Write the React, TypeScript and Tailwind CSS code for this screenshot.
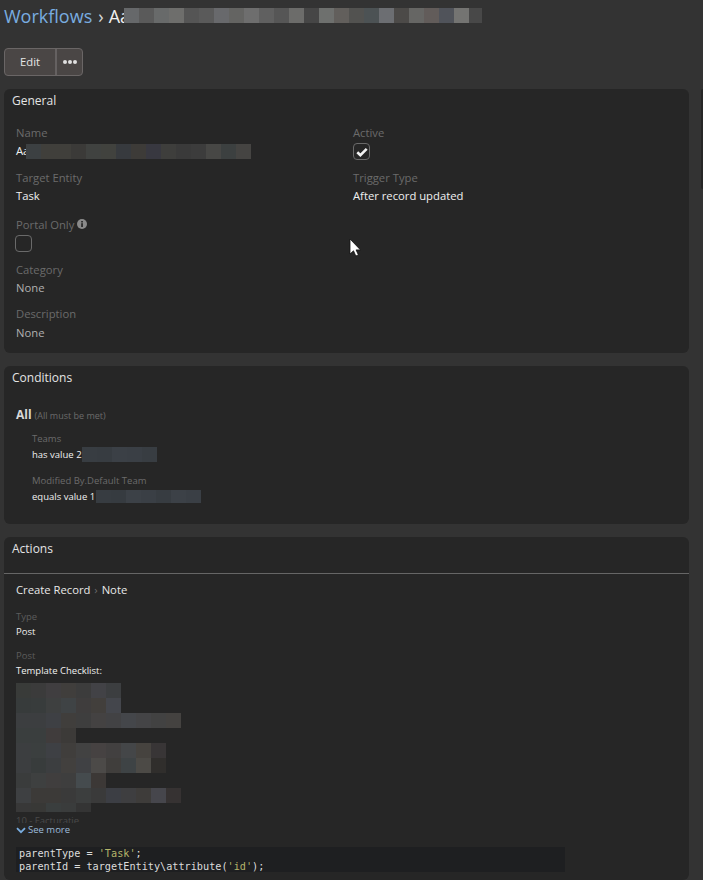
import type { ReactNode } from 'react';

const titleBlur = ['#66686a','#5a5a5a','#686a6a','#6e6e6c','#555555','#5a5a5a','#68696c','#646462','#6e6e6e','#606060','#565656','#6c6c6a','#464646','#6e706e','#625f5c','#525250','#4c5254','#6c6e72','#4c4a48','#666664','#625c5a','#50535a','#747472','#484848'];
const nameBlur = ['#3c4042','#403f3b','#403f3b','#3b3a38','#404240','#41423e','#373a3e','#3d3b38','#383840','#3e3e3c','#3a3a3a','#3c3c3c','#474745','#3c4040','#454442'];
const checklist = [
  { h: 'h-[15px]', cells: ['#393b39','#3b3b3b','#403e40','#403e3c','#3c3c3c','#424246','#3c3e40'] },
  { h: 'h-[15px]', cells: ['#373b3b','#383c3c','#3e4040','#3f4345','#3f3d3d','#423f3c','#44464c'] },
  { h: 'h-[15px]', cells: ['#3c3e40','#3c3e40','#3e4044','#403e3c','#3e3e3e','#444242','#424244','#44464a','#444446','#424242','#444240'] },
  { h: 'h-[15px]', cells: ['#3a3e3e','#3a3e3e','#403c3c','#3c3a38'] },
  { h: 'h-[15px]', cells: ['#3c3e40','#3b3f3f','#3e4044','#403e3c','#424242','#464242','#424040','#444648','#46433f','#383536'] },
  { h: 'h-[15px]', cells: ['#3c3e40','#383c3c','#3c3e40','#42403e','#404144','#4c4a48','#403e3c','#3e4345','#4c4a46','#302e2c'] },
  { h: 'h-[15px]', cells: ['#3a3c3c','#3e4040','#403e3e','#3e3e3e','#454b4e','#3c3836'] },
  { h: 'h-[15px]', cells: ['#3e4042','#3c3a38','#3c3a38','#3a3a3a','#3c3e3e','#3a3a3a','#3c3e44','#3e3e40','#3e3c3a','#46464c','#363232'] },
  { h: 'h-[9px]', cells: ['#383838','#383836','#3a3e3e','#3a3c3c','#343434'] },
];

function Blur({ cells, className = 'h-[15px]' }: { cells: string[]; className?: string }) {
  return (
    <span className={`inline-flex shrink-0 overflow-hidden align-top ${className}`}>
      {cells.map((c, i) => (
        <span key={i} className="w-[15px] shrink-0 h-full" style={{ backgroundColor: c }} />
      ))}
    </span>
  );
}

function Panel({ title, className, children }: { title: string; className: string; children: ReactNode }) {
  return (
    <section className={`mx-[4px] w-[685px] rounded-[6px] bg-[#262626] ${className}`}>
      <h2 className="pl-[8px] pt-[3px] h-[20px] text-[12px] leading-[18px] font-normal text-[#e4e4e4]">{title}</h2>
      {children}
    </section>
  );
}

function Field({ label, className = '', children }: { label: ReactNode; className?: string; children: ReactNode }) {
  return (
    <div className={`h-[36px] ${className}`}>
      <div className="h-[18px] text-[11.25px] leading-[18px] text-[#6b6b6b]">{label}</div>
      <div className="flex h-[18px] text-[11.25px] leading-[18px] text-[#f0f0f0]">{children}</div>
    </div>
  );
}

function Checkbox({ checked, className = '' }: { checked?: boolean; className?: string }) {
  return (
    <div className={`w-[17px] h-[17px] rounded-[4px] border border-[#6a6a6a] flex items-center justify-center ${className}`}>
      {checked && (
        <svg viewBox="0 0 12 10" className="w-[12px] h-[10px]">
          <path d="M1.3 5.2 4.4 8.2 10.7 1.8" fill="none" stroke="#f2f2f2" strokeWidth="2.6" />
        </svg>
      )}
    </div>
  );
}

export default function App() {
  return (
    <div className="relative w-[703px] h-[880px] overflow-hidden bg-[#333333] font-['Open_Sans',sans-serif]">
      <h1 className="h-[48px] pl-[4px] pt-[3px] flex items-start text-[18px] leading-[26px] font-normal text-[#f0f0f0]">
        <span className="text-[#79ade0]">Workflows</span>
        <span className="ml-[6px] text-[#d8d8d8]">›</span>
        <span className="ml-[5px] w-[15px] whitespace-nowrap">Aa</span>
        <Blur cells={titleBlur} className="relative w-[358px] h-[15px] mt-[5px]" />
      </h1>

      <div className="ml-[4px] flex h-[28px] w-[79px] rounded-[4px] border border-[#6a6666] bg-[#4a4645] text-[#e6e6e6]">
        <div className="w-[52px] border-r-2 border-[#656161] text-center text-[11.25px] leading-[26px]">Edit</div>
        <div className="flex-1 flex items-center justify-center gap-[1px]">
          <span className="w-[4px] h-[4px] rounded-full bg-[#e0e0e0]" />
          <span className="w-[4px] h-[4px] rounded-full bg-[#e0e0e0]" />
          <span className="w-[4px] h-[4px] rounded-full bg-[#e0e0e0]" />
        </div>
      </div>

      <Panel title="General" className="relative mt-[13px] h-[264px]">
        <div className="grid grid-cols-[337px_1fr] pl-[12px] pt-[15px]">
          <Field label="Name">
            <span className="w-[10px] whitespace-nowrap">Aa</span>
            <Blur cells={nameBlur} className="relative h-[15px] mt-[2px]" />
          </Field>
          <div className="h-[36px]">
            <div className="h-[18px] text-[11.25px] leading-[18px] text-[#6b6b6b]">Active</div>
            <Checkbox checked className="mt-[1px]" />
          </div>
          <Field label="Target Entity" className="mt-[9px]">Task</Field>
          <Field label="Trigger Type" className="mt-[9px]">After record updated</Field>
          <div className="mt-[11px] h-[36px] col-span-2">
            <div className="flex items-center h-[18px] text-[11.25px] leading-[18px] text-[#6b6b6b]">
              Portal Only
              <svg viewBox="0 0 10 10" className="ml-[3px] mb-[2px] w-[10px] h-[10px]">
                <circle cx="5" cy="5" r="5" fill="#8a8a8a" />
                <rect x="4.2" y="4.2" width="1.7" height="3.8" fill="#262626" />
                <rect x="4.2" y="2" width="1.7" height="1.5" fill="#262626" />
              </svg>
            </div>
            <Checkbox className="-ml-[1px] mt-[1px]" />
          </div>
          <div className="mt-[9px] col-span-2">
            <div className="h-[18px] text-[11.25px] leading-[18px] text-[#6b6b6b]">Category</div>
            <div className="h-[18px] text-[11.25px] leading-[18px] text-[#b0b0b0]">None</div>
          </div>
          <div className="mt-[8px] col-span-2">
            <div className="h-[18px] text-[11.25px] leading-[18px] text-[#6b6b6b]">Description</div>
            <div className="h-[19px] text-[11.25px] leading-[20px] text-[#b0b0b0]">None</div>
          </div>
        </div>
      </Panel>

      <Panel title="Conditions" className="mt-[13px] h-[158px]">
        <div className="pl-[12px] pt-[20px]">
          <div className="h-[18px] flex items-baseline text-[#e4e4e4]">
            <span className="text-[12px] leading-[18px] font-bold text-[#d8d8d8]">All</span>
            <span className="ml-[3px] text-[9px] text-[#6b6b6b]">(All must be met)</span>
          </div>
          <div className="pl-[16px] pt-[7px] text-[9.5px] leading-[16px]">
            <div className="text-[#6b6b6b]">Teams</div>
            <div className="flex h-[16px] text-[#f0f0f0]">
              <span className="w-[50px] whitespace-nowrap">has value 2</span>
              <Blur cells={['#383d42','#373c41','#3b4046','#3a3f45','#383d42']} className="h-[15px]" />
            </div>
            <div className="mt-[10px] text-[#6b6b6b]">Modified By.Default Team</div>
            <div className="flex h-[16px] text-[#f0f0f0]">
              <span className="w-[64px] whitespace-nowrap">equals value 1</span>
              <Blur cells={['#373c41','#363b40','#3c4147','#3a3f45','#373c41','#3c4147','#3a3f45']} className="h-[13px] mt-[1px]" />
            </div>
          </div>
        </div>
      </Panel>

      <Panel title="Actions" className="mt-[13px] h-[343px]">
        <div className="mt-[16px] border-t border-[#666666] pl-[12px] pt-[7px]">
          <div className="h-[18px] text-[11.25px] leading-[18px] text-[#e8e8e8]">
            Create Record <span className="mx-[1px] text-[#6b6b6b]">›</span> Note
          </div>
          <div className="pt-[10px] text-[9.5px] leading-[15px]">
            <div className="text-[#5c5c5c]">Type</div>
            <div className="text-[#f0f0f0]">Post</div>
            <div className="mt-[9px] text-[#5c5c5c]">Post</div>
            <div className="text-[#f0f0f0]">Template Checklist:</div>
          </div>
          <div className="pt-[5px] flex flex-col">
            {checklist.map((row, i) => (
              <Blur key={i} cells={row.cells} className={row.h} />
            ))}
            <div className="h-[11px] pt-[1px] overflow-hidden text-[9.5px] leading-[16px] text-[#4a4a4a]">10 - Facturatie</div>
          </div>
          <div className="h-[15px] flex items-center text-[9.5px] text-[#9dbcdc]">
            <svg viewBox="0 0 10 7" className="w-[10px] h-[7px] mr-[2px]">
              <path d="M1 1.2 5 5.2 9 1.2" fill="none" stroke="#79ade0" strokeWidth="1.8" />
            </svg>
            See more
          </div>
          <div className="mt-[10px] w-[549px] h-[25px] bg-[#1e1f21] pl-[3px] font-['DejaVu_Sans_Mono',monospace] text-[10.2px] leading-[13px] text-[#dcdcdc] whitespace-pre">
            <div className="-mt-[1px]">parentType = <span className="text-[#b5b56a]">'Task'</span>;</div>
            <div>parentId = targetEntity\attribute(<span className="text-[#b5b56a]">'id'</span>);</div>
          </div>
        </div>
      </Panel>

      {/* next column peeks in at the right edge */}
      <div className="absolute left-[701px] top-[89px] w-[2px] h-[100px] rounded-l-[2px] bg-[#262626]" />

      {/* mouse pointer */}
      <svg viewBox="0 0 12 19" className="absolute left-[349px] top-[238px] w-[12px] h-[19px]">
        <path d="M1 1v15l3.5-3.2 2.3 5.2 2.6-1.1-2.3-5H11.5z" fill="#ffffff" stroke="#111111" strokeWidth="0.8" />
      </svg>
    </div>
  );
}
